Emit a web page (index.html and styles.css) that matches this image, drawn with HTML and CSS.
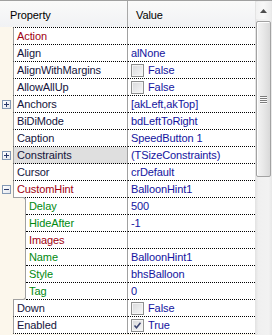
FILE: index.html
```html
<!DOCTYPE html>
<html>
<head>
<meta charset="utf-8">
<link rel="stylesheet" href="styles.css">
</head>
<body>
<div class="inspector">
  <div class="list">
    <div class="head">
      <div class="h-prop">Property</div>
      <div class="h-val">Value</div>
    </div>
    <div class="row first"><div class="gut"></div><div class="name ref">Action</div><div class="val"></div></div>
    <div class="row"><div class="gut"></div><div class="name">Align</div><div class="val">alNone</div></div>
    <div class="row"><div class="gut"></div><div class="name">AlignWithMargins</div><div class="val"><span class="cb"></span>False</div></div>
    <div class="row"><div class="gut"></div><div class="name">AllowAllUp</div><div class="val"><span class="cb"></span>False</div></div>
    <div class="row"><div class="gut"><span class="exp plus"></span></div><div class="name">Anchors</div><div class="val">[akLeft,akTop]</div></div>
    <div class="row"><div class="gut"></div><div class="name">BiDiMode</div><div class="val">bdLeftToRight</div></div>
    <div class="row"><div class="gut"></div><div class="name">Caption</div><div class="val">SpeedButton 1</div></div>
    <div class="row"><div class="gut"><span class="exp plus"></span></div><div class="name sel">Constraints</div><div class="val">(TSizeConstraints)</div></div>
    <div class="row"><div class="gut"></div><div class="name">Cursor</div><div class="val">crDefault</div></div>
    <div class="row"><div class="gut"><span class="exp"></span></div><div class="name ref">CustomHint</div><div class="val">BalloonHint1</div></div>
    <div class="row sub sub-first"><div class="gut"></div><div class="ind"></div><div class="name child">Delay</div><div class="val">500</div></div>
    <div class="row sub"><div class="gut"></div><div class="ind"></div><div class="name child">HideAfter</div><div class="val">-1</div></div>
    <div class="row sub"><div class="gut"></div><div class="ind"></div><div class="name ref">Images</div><div class="val"></div></div>
    <div class="row sub"><div class="gut"></div><div class="ind"></div><div class="name child">Name</div><div class="val">BalloonHint1</div></div>
    <div class="row sub"><div class="gut"></div><div class="ind"></div><div class="name child">Style</div><div class="val">bhsBalloon</div></div>
    <div class="row sub sub-last"><div class="gut"></div><div class="ind"></div><div class="name child">Tag</div><div class="val">0</div></div>
    <div class="row"><div class="gut"></div><div class="name">Down</div><div class="val"><span class="cb"></span>False</div></div>
    <div class="row"><div class="gut"></div><div class="name">Enabled</div><div class="val"><span class="cb on"><svg width="11" height="11" viewBox="0 0 11 11"><path d="M2.5 5.5 L4.5 7.8 L8.5 2.8" fill="none" stroke="#3a4470" stroke-width="1.5"/></svg></span>True</div></div>
  </div>
  <div class="scroll">
    <div class="sb-up"><svg width="7" height="4" viewBox="0 0 7 4"><path d="M0 4 L3.5 0 L7 4Z" fill="#4d4d4d"/></svg></div>
    <div class="sb-thumb"><div class="grip"><i></i><i></i><i></i><i></i></div></div>
  </div>
</div>
</body>
</html>
```
FILE: styles.css
```css
* { box-sizing: border-box; }
html, body { margin: 0; padding: 0; }
body {
  width: 272px;
  height: 335px;
  overflow: hidden;
  background: #fff;
  font-family: "Liberation Sans", Arial, sans-serif;
  font-size: 11px;
  letter-spacing: -0.1px;
}
.inspector {
  display: flex;
  width: 272px;
  height: 335px;
  border-top: 1px solid #a0a0a0;
  overflow: hidden;
}
.list {
  width: 255px;
  flex: none;
  background: #fcf7ec;
}
.head {
  display: grid;
  grid-template-columns: 128px 1fr;
  height: 26px;
  background: linear-gradient(#fafafa, #f1f2f4);
  color: #000;
}
.h-prop {
  padding-left: 10px;
  padding-top: 1px;
  line-height: 26px;
  border-right: 1px solid #a8a8a8;
}
.h-val {
  padding-left: 8px;
  padding-top: 1px;
  line-height: 26px;
}
.row {
  display: grid;
  grid-template-columns: 13px 115px 1fr;
  height: 17px;
}
.row.first { height: 18px; }
.row.sub { grid-template-columns: 13px 13px 102px 1fr; }
.gut {
  background: #fcf7ec;
  display: flex;
  align-items: center;
  justify-content: center;
  padding-bottom: 1px;
}
.ind {
  background: #fcf7ec;
  border-right: 1px solid #a0a0a0;
}
.sub-first .ind {
  margin-top: -1px;
  border-top: 1px solid #a0a0a0;
  border-top-right-radius: 3px;
}
.sub-last .ind {
  border-bottom: 1px solid #a0a0a0;
  border-bottom-right-radius: 3px;
}
.name {
  background: #fff;
  border-left: 1px solid #a0a0a0;
  border-right: 1px solid #a0a0a0;
  border-bottom: 1px dotted #000;
  padding-left: 3px;
  line-height: 16px;
  color: #14143c;
  white-space: nowrap;
  overflow: hidden;
}
.sub .name { border-left: none; }
.name.ref { color: #a00010; }
.name.child { color: #008a10; }
.name.sel { background: #dfdfdf; }
.val {
  background: #fff;
  border-bottom: 1px dotted #000;
  padding-left: 3px;
  line-height: 16px;
  color: #1414a0;
  display: flex;
  align-items: center;
  white-space: nowrap;
}
.first .name, .first .val { border-top: 1px dotted #000; }
.exp {
  position: relative;
  width: 9px;
  height: 9px;
  border: 1px solid #8499b4;
  background: linear-gradient(135deg, #ffffff, #e4e8ee);
}
.exp::before {
  content: "";
  position: absolute;
  left: 1px;
  top: 3px;
  width: 5px;
  height: 1px;
  background: #2a3a6a;
}
.exp.plus::after {
  content: "";
  position: absolute;
  left: 3px;
  top: 1px;
  width: 1px;
  height: 5px;
  background: #2a3a6a;
}
.cb {
  display: flex;
  align-items: center;
  justify-content: center;
  width: 13px;
  height: 13px;
  margin-right: 4px;
  border: 1px solid #8e8f8f;
  background: linear-gradient(135deg, #d8d9db, #f8f8f8);
  box-shadow: inset 0 0 0 1px #f4f4f4;
}
.scroll {
  width: 17px;
  flex: none;
  padding: 1px 1px 0 1px;
  background: linear-gradient(to right, #e2e2e2, #f0f0f0 20%, #f2f2f2 80%, #e8e8e8);
  display: flex;
  flex-direction: column;
}
.sb-up {
  height: 17px;
  display: flex;
  align-items: center;
  justify-content: center;
  background: linear-gradient(to right, #f2f2f2, #f8f8f8 50%, #ececec);
}
.sb-thumb {
  margin-top: 2px;
  height: 156px;
  border: 1px solid #a2a2a2;
  border-radius: 2px;
  background: linear-gradient(to right, #f4f4f4, #e8e8e8 50%, #d9d9d9);
  box-shadow: inset 1px 1px 0 #fdfdfd;
  display: flex;
  align-items: center;
  justify-content: center;
}
.grip {
  display: flex;
  flex-direction: column;
  gap: 1px;
}
.grip i {
  display: block;
  width: 7px;
  height: 1px;
  background: #7c7c7c;
  box-shadow: 0 1px 0 #fafafa;
}
```
